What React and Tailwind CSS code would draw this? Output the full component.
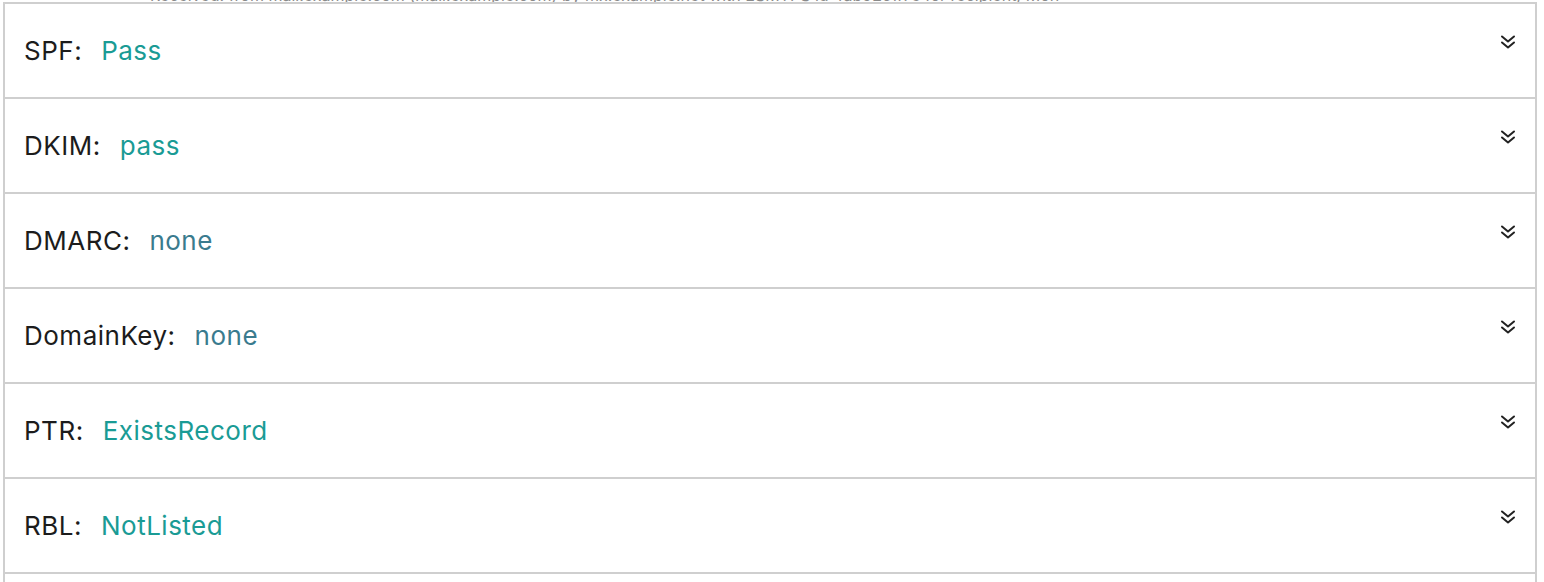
import React from "react";

const rows = [
  { label: "SPF", value: "Pass", color: "text-[#1a9b95]" },
  { label: "DKIM", value: "pass", color: "text-[#1a9b95]" },
  { label: "DMARC", value: "none", color: "text-[#3a7b8e]" },
  { label: "DomainKey", value: "none", color: "text-[#3a7b8e]" },
  { label: "PTR", value: "ExistsRecord", color: "text-[#1a9b95]" },
  { label: "RBL", value: "NotListed", color: "text-[#1a9b95]" },
  { label: "", value: "", color: "" },
];

const Chevrons = () => (
  <svg
    width="16"
    height="16"
    viewBox="0 0 16 16"
    fill="none"
    xmlns="http://www.w3.org/2000/svg"
  >
    <path
      d="M2 2.5l6 5 6-5M2 8.5l6 5 6-5"
      stroke="#222"
      strokeWidth="2"
      strokeLinecap="round"
      strokeLinejoin="round"
    />
  </svg>
);

const App = () => {
  return (
    <div
      className="w-[1544px] h-[582px] overflow-hidden bg-white"
      style={{ fontFamily: "Inter, 'Noto Sans', sans-serif" }}
    >
      {/* clipped text from the section above */}
      <div className="h-[2px] overflow-hidden pl-[150px]">
        <div className="-mt-[13px] text-[16px] leading-[16px] text-[#8a8a8a] whitespace-nowrap">
          Received: from mail.example.com (mail.example.com) by mx.example.net with ESMTPS id 4ab92c1f7e for recipient; Mon
        </div>
      </div>
      <div className="ml-[3px] w-[1534px] border-t-2 border-l-2 border-r-2 border-[#cfcfcf]">
        {rows.map((row, i) => (
          <div
            key={i}
            className="h-[95px] border-b-2 border-[#cfcfcf] flex items-start justify-between pl-[19px] pr-[19px]"
          >
            {row.label ? (
              <div className="h-[93px] flex items-center text-[26px] text-[#1c1c1c] tracking-[0.5px] pb-[1px]">
                <span>{row.label}:</span>
                <span className={`ml-[19px] ${row.color}`}>{row.value}</span>
              </div>
            ) : (
              <div />
            )}
            {row.label ? (
              <div className="pt-[30px]">
                <Chevrons />
              </div>
            ) : null}
          </div>
        ))}
      </div>
    </div>
  );
};

export default App;
